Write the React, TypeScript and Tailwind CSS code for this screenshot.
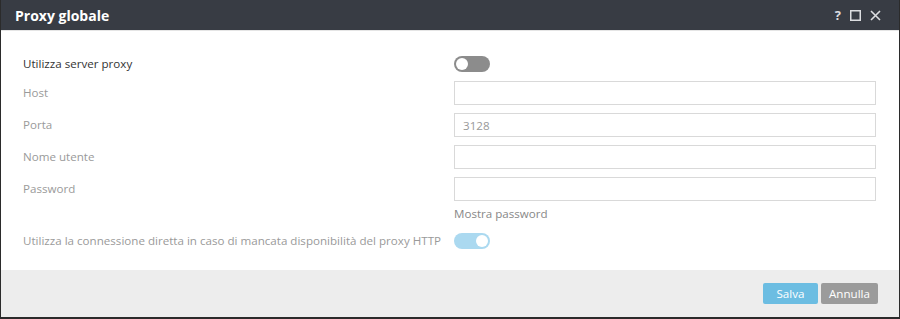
import React, { useState } from 'react';

const Toggle: React.FC<{ on: boolean; onChange: () => void }> = ({ on, onChange }) => (
  <button
    onClick={onChange}
    className={`relative w-[36px] h-[16px] rounded-full ${on ? 'bg-[#abd9f0]' : 'bg-[#8c8c8c]'}`}
  >
    <span
      className={`absolute top-[2px] w-[12px] h-[12px] rounded-full bg-white ${on ? 'left-[22px]' : 'left-[2px]'}`}
    />
  </button>
);

const Field: React.FC<{ label: string; value?: string }> = ({ label, value }) => (
  <div className="flex items-center h-[24px] mt-[8px]">
    <span className="w-[431px] text-[#9a9a9a]">{label}</span>
    <input
      defaultValue={value}
      className="flex-1 h-[24px] border border-[#d9d9d9] px-[8px] text-[11.6px] text-[#999] outline-none"
    />
  </div>
);

export default function App() {
  const [useProxy, setUseProxy] = useState(false);
  const [direct, setDirect] = useState(true);

  return (
    <div className="h-[319px] bg-[#2b2b2b] px-[1px] font-['Open_Sans',sans-serif] text-[11.6px]">
      <div className="h-[317px] flex flex-col bg-white">
        <div className="h-[31px] bg-[#383c44] flex items-center justify-between pl-[14px] pr-[18px] border-b border-[#e5e5e5]">
          <span className="text-white font-bold text-[14px]">Proxy globale</span>
          <div className="flex items-center gap-[9px] text-[#dcdde0]">
            <span className="font-bold text-[13px] leading-none">?</span>
            <svg width="11" height="11" viewBox="0 0 11 11">
              <rect x="0.75" y="0.75" width="9.5" height="9.5" fill="none" stroke="currentColor" strokeWidth="1.5" />
            </svg>
            <svg width="11" height="11" viewBox="0 0 11 11">
              <path d="M1 1L10 10M10 1L1 10" stroke="currentColor" strokeWidth="1.6" />
            </svg>
          </div>
        </div>

        <div className="flex-1 pl-[22px] pr-[23px] pt-[21px]">
          <div className="flex items-center h-[24px]">
            <span className="w-[431px] text-[#333]">Utilizza server proxy</span>
            <Toggle on={useProxy} onChange={() => setUseProxy(!useProxy)} />
          </div>
          <div className="mt-[-3px]">
            <Field label="Host" />
          </div>
          <Field label="Porta" value="3128" />
          <Field label="Nome utente" />
          <Field label="Password" />
          <div className="pl-[431px] mt-[4px] text-[#888] leading-[18px]">Mostra password</div>
          <div className="flex items-center h-[24px] mt-[6px]">
            <span className="w-[431px] whitespace-nowrap text-[#9a9a9a]">
              Utilizza la connessione diretta in caso di mancata disponibilità del proxy HTTP
            </span>
            <Toggle on={direct} onChange={() => setDirect(!direct)} />
          </div>
        </div>

        <div className="h-[47px] bg-[#ededed] flex items-center justify-end gap-[3px] pr-[21px]">
          <button className="h-[21px] w-[55px] rounded-[2px] bg-[#6cbde2] text-white text-[11.6px]">Salva</button>
          <button className="h-[21px] w-[57px] rounded-[2px] bg-[#9b9b9b] text-white text-[11.6px]">Annulla</button>
        </div>
      </div>
    </div>
  );
}
